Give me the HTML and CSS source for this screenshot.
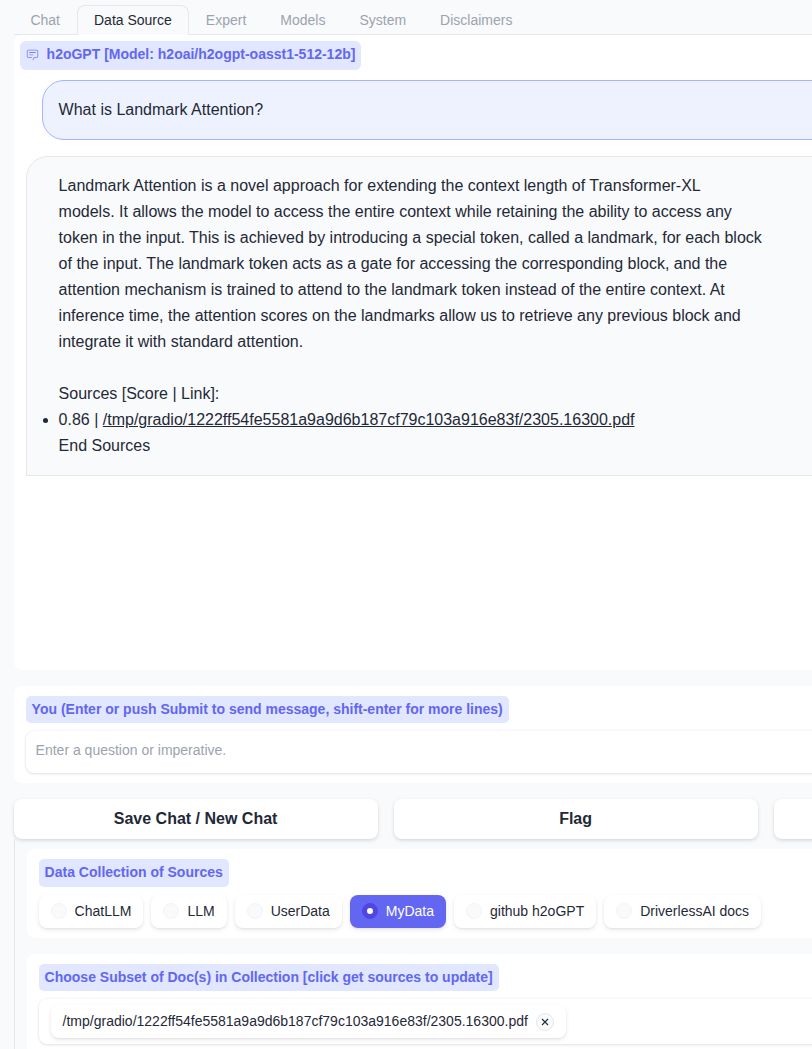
FILE: index.html
```html
<!DOCTYPE html>
<html lang="en">
<head>
<meta charset="utf-8">
<title>h2oGPT</title>
<link rel="stylesheet" href="styles.css">
</head>
<body>
<main class="app">
  <nav class="tabs">
    <button class="tab">Chat</button>
    <button class="tab selected">Data Source</button>
    <button class="tab">Expert</button>
    <button class="tab">Models</button>
    <button class="tab">System</button>
    <button class="tab">Disclaimers</button>
  </nav>

  <section class="chatbot">
    <div class="label chat-label">
      <svg class="chat-icon" viewBox="0 0 32 32" fill="currentColor"><path d="M17.74 30L16 29l4-7h6a2 2 0 0 0 2-2V8a2 2 0 0 0-2-2H6a2 2 0 0 0-2 2v12a2 2 0 0 0 2 2h9v2H6a4 4 0 0 1-4-4V8a4 4 0 0 1 4-4h20a4 4 0 0 1 4 4v12a4 4 0 0 1-4 4h-4.84Z"/><path d="M8 10h16v2H8zM8 16h10v2H8z"/></svg>
      <span>h2oGPT [Model: h2oai/h2ogpt-oasst1-512-12b]</span>
    </div>
    <div class="message user">What is Landmark Attention?</div>
    <div class="message bot">
      Landmark Attention is a novel approach for extending the context length of Transformer-XL<br>
      models. It allows the model to access the entire context while retaining the ability to access any<br>
      token in the input. This is achieved by introducing a special token, called a landmark, for each block<br>
      of the input. The landmark token acts as a gate for accessing the corresponding block, and the<br>
      attention mechanism is trained to attend to the landmark token instead of the entire context. At<br>
      inference time, the attention scores on the landmarks allow us to retrieve any previous block and<br>
      integrate it with standard attention.<br>
      <br>
      Sources [Score | Link]:
      <ul class="sources"><li>0.86 | <a href="#">/tmp/gradio/1222ff54fe5581a9a9d6b187cf79c103a916e83f/2305.16300.pdf</a></li></ul>
      End Sources
    </div>
  </section>

  <section class="block prompt">
    <span class="label">You (Enter or push Submit to send message, shift-enter for more lines)</span>
    <div class="field">Enter a question or imperative.</div>
  </section>

  <div class="actions">
    <button class="action">Save Chat / New Chat</button>
    <button class="action">Flag</button>
    <button class="action" aria-label="More"></button>
  </div>

  <div class="tab-panel">
    <section class="block">
      <span class="label tall">Data Collection of Sources</span>
      <div class="options">
        <div class="option"><i class="radio"></i>ChatLLM</div>
        <div class="option"><i class="radio"></i>LLM</div>
        <div class="option"><i class="radio"></i>UserData</div>
        <div class="option checked"><i class="radio"></i>MyData</div>
        <div class="option"><i class="radio"></i>github h2oGPT</div>
        <div class="option"><i class="radio"></i>DriverlessAI docs</div>
      </div>
    </section>
    <section class="block">
      <span class="label">Choose Subset of Doc(s) in Collection [click get sources to update]</span>
      <div class="multiselect">
        <div class="token">/tmp/gradio/1222ff54fe5581a9a9d6b187cf79c103a916e83f/2305.16300.pdf
          <span class="remove"><svg viewBox="0 0 8 8"><path d="M1 1l6 6M7 1L1 7"/></svg></span>
        </div>
      </div>
    </section>
  </div>
</main>
</body>
</html>
```
FILE: styles.css
```css
* { box-sizing: border-box; }

html, body {
  height: 100%;
  margin: 0;
  overflow: hidden;
}

body {
  background: #f9fafb;
  color: #1f2937;
  font: 14px/21px "Liberation Sans", Arial, sans-serif;
}

button { font: inherit; color: inherit; }

.app {
  width: 1138px;
  padding: 5px 0 0 13.6px;
}

.tabs {
  display: flex;
  border-bottom: 1px solid #e5e7eb;
}

.tab {
  height: 30px;
  margin-bottom: -1px;
  padding: 0 16px;
  border: 1px solid transparent;
  border-bottom: 0;
  border-radius: 8px 8px 0 0;
  background: none;
  color: #9ca3af;
  white-space: nowrap;
}

.tab.selected {
  border-color: #e5e7eb;
  background: #f9fafb;
  color: #1f2937;
}

.tab:first-child { margin-left: -.2px; }

.chatbot {
  display: flex;
  flex-direction: column;
  height: 635px;
  padding: 6px 0 0 6px;
  border-radius: 8px;
  background: #fff;
}

.label {
  display: block;
  width: fit-content;
  height: 27px;
  padding: 3px 6px;
  border-radius: 5px;
  background: #e0e7ff;
  color: #6366f1;
  font-weight: 700;
  white-space: nowrap;
}

.label.tall { height: 28px; }

.chat-label {
  display: flex;
  align-items: center;
  gap: 8px;
  height: 29px;
  padding-bottom: 5px;
  border-radius: 6px;
}

.chat-icon {
  width: 13px;
  height: 13px;
  opacity: .8;
}

.message {
  padding: 16px;
  border: 1px solid #e5e7eb;
  background: #f9fafb;
  font-size: 16px;
  line-height: 26px;
  white-space: nowrap;
}

.message.user {
  margin: 10px 0 0 22px;
  border-color: #a5b4fc;
  border-radius: 22px 22px 0 22px;
  background: #eef2ff;
}

.message.bot {
  margin: 16px 0 0 6px;
  padding-left: 32px;
  border-radius: 22px 22px 22px 0;
}

.sources {
  margin: 0;
  padding: 0;
}

.sources a { color: inherit; }

.block {
  padding: 10px 12px;
  border-radius: 8px;
  background: #fff;
}

.prompt {
  height: 97px;
  margin-top: 16px;
}

.field {
  height: 42px;
  margin-top: 8px;
  padding: 9px 10px;
  border-radius: 8px;
  background: #fff;
  box-shadow: 0 0 3px rgba(0, 0, 0, .06), 0 1px 3px rgba(0, 0, 0, .1);
  color: #9ca3af;
}

.actions {
  position: relative;
  display: grid;
  grid-template-columns: repeat(3, 364px);
  gap: 16px;
  margin-top: 16px;
}

.action {
  height: 40px;
  padding: 0 6px 2px;
  border: 0;
  border-radius: 8px;
  background: #fff;
  box-shadow: 0 1px 3px rgba(0, 0, 0, .08), 0 2px 5px rgba(0, 0, 0, .08);
  font-size: 16px;
  font-weight: 700;
}

.tab-panel {
  display: flex;
  flex-direction: column;
  gap: 16px;
  padding: 10px 12px;
  border-left: 1px solid #e5e7eb;
}

.options {
  display: flex;
  gap: 8px;
  margin-top: 8px;
}

.option {
  display: flex;
  align-items: center;
  gap: 8px;
  height: 33px;
  padding: 0 12px 1px;
  border-radius: 8px;
  background: #fff;
  box-shadow: 0 1px 2px rgba(0, 0, 0, .06), 0 2px 5px rgba(0, 0, 0, .08);
  white-space: nowrap;
}

.radio {
  display: grid;
  place-items: center;
  width: 16px;
  height: 16px;
  border: 1px solid #f3f4f6;
  border-radius: 50%;
  background: #f9fafb;
}

.checked {
  background: #6366f1;
  color: #fff;
}

.checked .radio {
  border-color: #4f46e5;
  background: #4f46e5;
}

.checked .radio::after {
  content: "";
  width: 6px;
  height: 6px;
  border-radius: 50%;
  background: #fff;
}

.multiselect {
  height: 45px;
  margin-top: 8px;
  padding: 6px 12px;
  border-radius: 8px;
  box-shadow: 0 0 3px rgba(0, 0, 0, .06), 0 1px 3px rgba(0, 0, 0, .1);
}

.token {
  display: flex;
  align-items: center;
  gap: 8px;
  width: fit-content;
  height: 33px;
  padding: 0 12px;
  border-radius: 8px;
  box-shadow: 0 1px 2px rgba(0, 0, 0, .06), 0 2px 5px rgba(0, 0, 0, .08);
  white-space: nowrap;
}

.remove {
  display: grid;
  place-items: center;
  width: 18px;
  height: 18px;
  margin-top: 1px;
  border: 1px solid #e5e7eb;
  border-radius: 50%;
  background: #f9fafb;
}

.remove svg {
  width: 8px;
  height: 8px;
  fill: none;
  stroke: #1f2937;
  stroke-width: 1.1;
}
```
